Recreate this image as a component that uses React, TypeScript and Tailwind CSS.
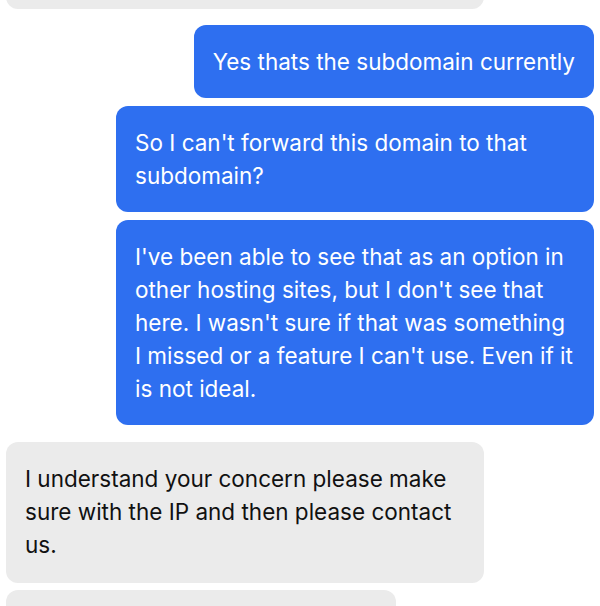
const blue = "rounded-xl bg-[#2e6ff0] px-[19px] py-[20px] text-white";
const gray = "rounded-xl bg-[#ebebeb] px-[19px] pt-[20px] pb-[22px] text-[#111111]";

export default function App() {
  return (
    <div
      className="h-[606px] w-[600px] overflow-hidden bg-white px-[6px] text-[22.5px] leading-[33px]"
      style={{ fontFamily: "Inter, 'Noto Sans', sans-serif" }}
    >
      {/* tail of the previous agent message */}
      <div className="flex h-[9px] items-end overflow-hidden">
        <div className="h-[60px] w-[478px] rounded-xl bg-[#ebebeb]" />
      </div>

      <div className="mt-[16px] flex flex-col items-end gap-[8px]">
        <div className={blue}>Yes thats the subdomain currently</div>
        <div className={`${blue} w-[478px] whitespace-nowrap`}>
          So I can't forward this domain to that
          <br />
          subdomain?
        </div>
        <div className={`${blue} w-[478px] whitespace-nowrap`}>
          I've been able to see that as an option in
          <br />
          other hosting sites, but I don't see that
          <br />
          here. I wasn't sure if that was something
          <br />
          I missed or a feature I can't use. Even if it
          <br />
          is not ideal.
        </div>
      </div>

      <div className="mt-[17px] flex flex-col items-start gap-[7px]">
        <div className={`${gray} w-[478px] whitespace-nowrap`}>
          I understand your concern please make
          <br />
          sure with the IP and then please contact
          <br />
          us.
        </div>
        <div className="h-[60px] w-[390px] rounded-xl bg-[#ebebeb]" />
      </div>
    </div>
  );
}
